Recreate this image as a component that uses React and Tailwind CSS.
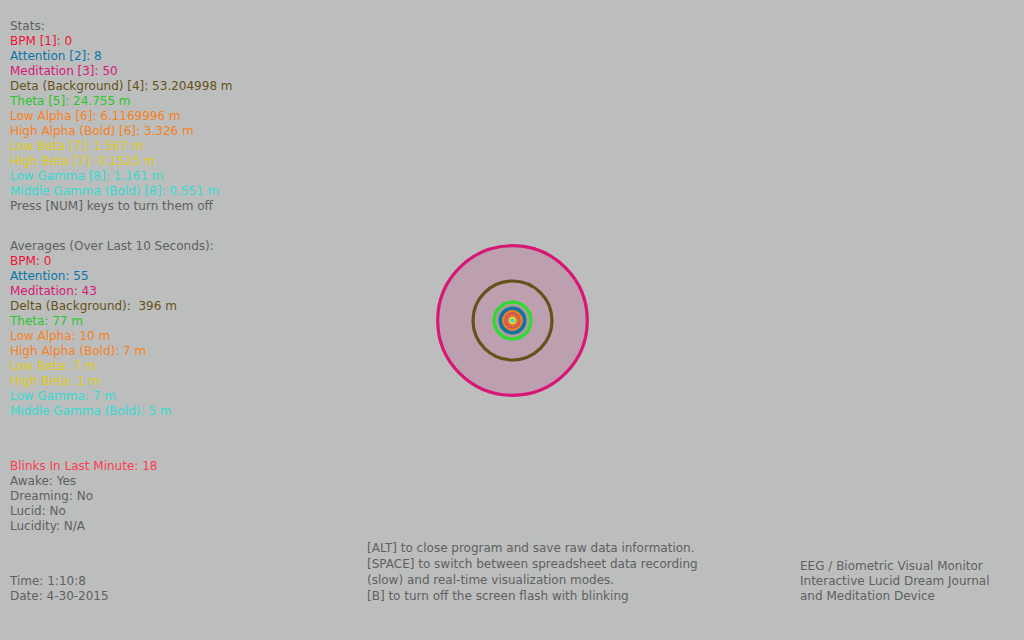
const stats = [
  { text: "BPM [1]: 0", color: "text-[#ed1236]" },
  { text: "Attention [2]: 8", color: "text-[#0b76a8]" },
  { text: "Meditation [3]: 50", color: "text-[#d6177a]" },
  { text: "Deta (Background) [4]: 53.204998 m", color: "text-[#66501a]" },
  { text: "Theta [5]: 24.755 m", color: "text-[#2cc52c]" },
  { text: "Low Alpha [6]: 6.1169996 m", color: "text-[#f9801c]" },
  { text: "High Alpha (Bold) [6]: 3.326 m", color: "text-[#f9801c]" },
  { text: "Low Beta [7]: 1.567 m", color: "text-[#dfcb1c]" },
  { text: "High Beta [7]: 0.1523 m", color: "text-[#dfcb1c]" },
  { text: "Low Gamma [8]: 1.161 m", color: "text-[#35dbd3]" },
  { text: "Middle Gamma (Bold) [8]: 0.551 m", color: "text-[#35dbd3]" },
];

const averages = [
  { text: "BPM: 0", color: "text-[#ed1236]" },
  { text: "Attention: 55", color: "text-[#0b76a8]" },
  { text: "Meditation: 43", color: "text-[#d6177a]" },
  { text: "Delta (Background):  396 m", color: "text-[#66501a]" },
  { text: "Theta: 77 m", color: "text-[#2cc52c]" },
  { text: "Low Alpha: 10 m", color: "text-[#f9801c]" },
  { text: "High Alpha (Bold): 7 m", color: "text-[#f9801c]" },
  { text: "Low Beta: 7 m", color: "text-[#dfcb1c]" },
  { text: "High Beta: 1 m", color: "text-[#dfcb1c]" },
  { text: "Low Gamma: 7 m", color: "text-[#35dbd3]" },
  { text: "Middle Gamma (Bold): 5 m", color: "text-[#35dbd3]" },
];

function Readings({ items }) {
  return (
    <ul>
      {items.map((item) => (
        <li key={item.text} className={item.color}>
          {item.text}
        </li>
      ))}
    </ul>
  );
}

function Rings() {
  return (
    <svg viewBox="0 0 153 153" className="size-[153px]" fill="none" role="img" aria-label="Signal rings">
      <circle cx="76.5" cy="76.5" r="74.8" fill="#bca0b0" stroke="#d81676" strokeWidth="3.2" />
      <circle cx="76.5" cy="76.5" r="39.5" stroke="#67501a" strokeWidth="3.2" />
      <circle cx="76.5" cy="76.5" r="18.5" fill="#a99f97" stroke="#2bdc2b" strokeWidth="3" />
      <circle cx="76.5" cy="76.5" r="12" fill="#a99f97" stroke="#0f74a0" strokeWidth="4" />
      <circle cx="76.5" cy="76.5" r="9.4" fill="#b89a80" stroke="#f5801c" strokeWidth="2" />
      <circle cx="76.5" cy="76.5" r="7.6" stroke="#e0383c" strokeWidth="1.2" />
      <circle cx="76.5" cy="76.5" r="5.6" stroke="#e0483c" strokeWidth="1.2" />
      <circle cx="76.5" cy="76.5" r="4.4" stroke="#f5801c" strokeWidth="1.2" />
      <circle cx="76.5" cy="76.5" r="2.8" fill="#35dbd3" stroke="#e6dc2c" strokeWidth="1.4" />
    </svg>
  );
}

export default function App() {
  return (
    <main className="grid min-h-screen bg-[#bcbebd] font-['DejaVu_Sans',sans-serif] text-[12px] leading-[15px] whitespace-pre text-[#606060]">
      <div className="col-start-1 row-start-1 place-self-center pt-px pl-px">
        <Rings />
      </div>
      <div className="col-start-1 row-start-1 grid grid-cols-[357fr_433fr_224fr] items-end pt-[19px] pb-9 pl-[10px]">
        <div className="flex flex-col gap-10">
          <div className="flex flex-col gap-[25px]">
            <section>
              <h2>Stats:</h2>
              <Readings items={stats} />
              <p>Press [NUM] keys to turn them off</p>
            </section>
            <section>
              <h2>Averages (Over Last 10 Seconds):</h2>
              <Readings items={averages} />
            </section>
          </div>
          <section>
            <p className="text-[#fa3c50]">Blinks In Last Minute: 18</p>
            <p>Awake: Yes</p>
            <p>Dreaming: No</p>
            <p>Lucid: No</p>
            <p>Lucidity: N/A</p>
          </section>
          <section>
            <p>Time: 1:10:8</p>
            <p>Date: 4-30-2015</p>
          </section>
        </div>
        <div className="leading-4">
          <p>[ALT] to close program and save raw data information.</p>
          <p>[SPACE] to switch between spreadsheet data recording</p>
          <p>(slow) and real-time visualization modes.</p>
          <p>[B] to turn off the screen flash with blinking</p>
        </div>
        <div>
          <p>EEG / Biometric Visual Monitor</p>
          <p>Interactive Lucid Dream Journal</p>
          <p>and Meditation Device</p>
        </div>
      </div>
    </main>
  );
}
